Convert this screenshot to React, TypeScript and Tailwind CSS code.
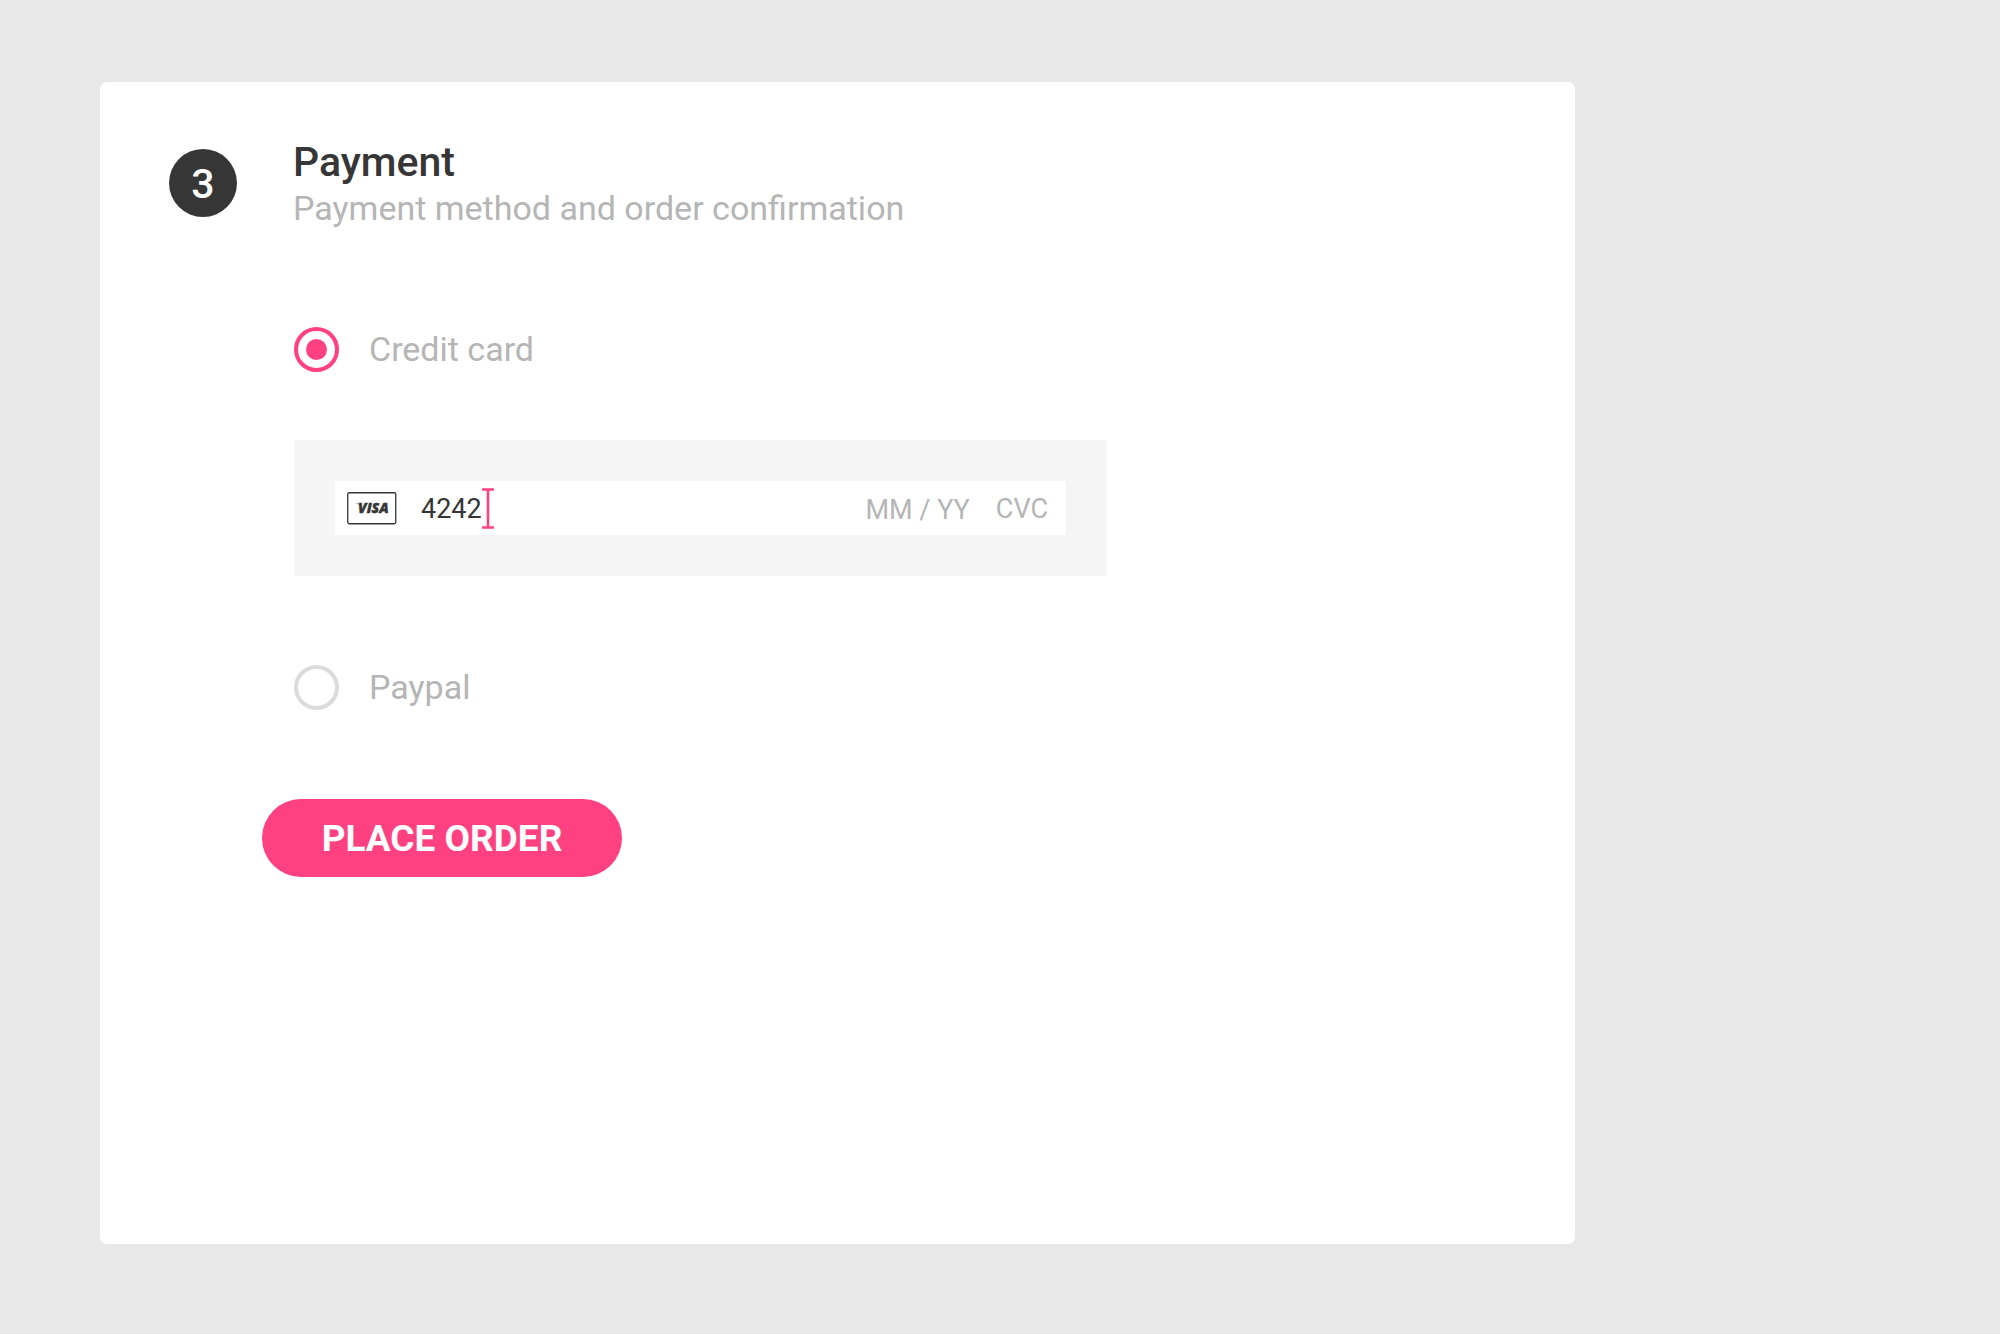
import { useState } from "react";

function VisaCard() {
  return (
    <svg
      viewBox="0 0 50 33"
      className="h-[33px] w-[50px] shrink-0"
      role="img"
      aria-label="Visa"
    >
      <rect x="0.75" y="0.75" width="48" height="31" rx="1.5" fill="#ffffff" stroke="#363636" strokeWidth="1.3" />
      <path d="M8.500 11.200h4.200c.9 0 1.400.4 1.600 1.200l1 4.600c-1.300-2.700-3.400-4.600-6.800-5.500z" fill="#a8a8a8" />
      <text
        x="11"
        y="21"
        fill="#363636"
        stroke="#363636"
        strokeWidth="0.4"
        className="font-['Open_Sans',sans-serif] text-[14px] font-extrabold italic"
      >
        VISA
      </text>
    </svg>
  );
}

function TextCursor() {
  return (
    <svg viewBox="0 0 12 41" className="h-[41px] w-[12px] shrink-0" aria-hidden="true">
      <path d="M1 1.500h10M1 39.500h10M6 1.500v38" fill="none" stroke="#ff4081" strokeWidth="2.600" strokeLinecap="round" />
    </svg>
  );
}

type OptionProps = {
  label: string;
  value: string;
  selected: string;
  onSelect: (value: string) => void;
};

function PaymentOption({ label, value, selected, onSelect }: OptionProps) {
  return (
    <label className="flex w-fit cursor-pointer items-center gap-[30px] text-[34px] leading-[45px] text-[#b5b5b5]">
      <input
        type="radio"
        name="payment-method"
        value={value}
        checked={selected === value}
        onChange={() => onSelect(value)}
        className="grid size-[45px] shrink-0 appearance-none place-items-center rounded-full border-4 border-[#dbdbdb] before:size-[21px] before:rounded-full checked:border-[#ff4081] checked:before:bg-[#ff4081]"
      />
      {label}
    </label>
  );
}

export default function App() {
  const [method, setMethod] = useState("card");
  const [number, setNumber] = useState("4242");

  return (
    <main className="flex min-h-screen flex-col bg-[#e8e8e8] px-[100px] pt-[82px] pb-[90px] font-[Roboto,sans-serif]">
      <section className="flex w-full max-w-[1475px] grow items-start gap-[57px] rounded-[7px] bg-white px-[69px] py-14">
        <div className="mt-[11px] grid size-[68px] shrink-0 place-items-center rounded-full bg-[#363636] pt-0.5 text-[41px] leading-none font-medium text-white">
          3
        </div>
        <form className="min-w-0 grow" onSubmit={(e) => e.preventDefault()}>
          <h1 className="-ml-px text-[41px] leading-[48px] font-medium text-[#363636]">Payment</h1>
          <p className="-ml-px text-[34px] leading-[44px] text-[#b5b5b5]">Payment method and order confirmation</p>

          <div className="mt-[97px]">
            <PaymentOption label="Credit card" value="card" selected={method} onSelect={setMethod} />
          </div>

          <div className="mt-[68px] max-w-[813px] rounded-[4px] bg-[#f5f5f5] p-[41px]">
            <div className="flex h-[54px] items-center rounded-[2px] bg-white px-3 text-[27px]">
              <VisaCard />
              <div className="ml-6 flex grow items-center">
                <input
                  aria-label="Card number"
                  inputMode="numeric"
                  value={number}
                  onChange={(e) => setNumber(e.target.value)}
                  className="[field-sizing:content] pt-0.5 text-[#363636] caret-transparent outline-none"
                />
                <TextCursor />
              </div>
              <input
                aria-label="Expiry date"
                placeholder="MM / YY"
                className="mr-[26px] [field-sizing:content] pt-1 outline-none placeholder:text-[#b5b5b5]"
              />
              <input
                aria-label="Security code"
                placeholder="CVC"
                className="mr-1.5 [field-sizing:content] pt-0.5 outline-none placeholder:text-[#b5b5b5]"
              />
            </div>
          </div>

          <div className="mt-[89px]">
            <PaymentOption label="Paypal" value="paypal" selected={method} onSelect={setMethod} />
          </div>

          <button
            type="submit"
            className="mt-[89px] -ml-8 h-[78px] w-[360px] cursor-pointer rounded-full bg-[#ff4081] text-[37px] leading-none font-bold text-white"
          >
            PLACE ORDER
          </button>
        </form>
      </section>
    </main>
  );
}
